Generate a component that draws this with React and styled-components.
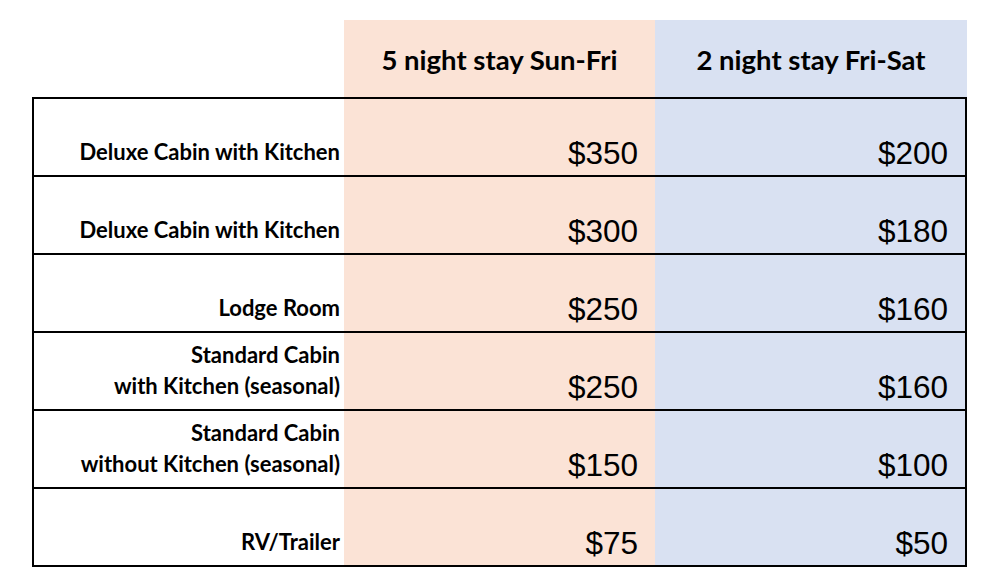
import React from "react";
import styled, { createGlobalStyle } from "styled-components";

const Global = createGlobalStyle`
  html, body { margin: 0; padding: 0; background: #fff; }
  body { font-family: Lato, "Liberation Sans", sans-serif; color: #000; }
`;

const PEACH = "#FBE3D6";
const BLUE = "#D9E1F2";

const Page = styled.div`
  width: 996px;
  height: 586px;
  padding: 20px 0 0 32px;
  box-sizing: border-box;
`;

const HeaderRow = styled.div`
  display: grid;
  grid-template-columns: 312px 311px 312px;
  height: 77px;
`;

const HeaderCell = styled.div`
  background: ${(p) => p.$bg || "transparent"};
  display: flex;
  align-items: center;
  justify-content: center;
  padding-top: 2px;
  font-family: Lato, "Liberation Sans", sans-serif;
  font-weight: 700;
  font-size: 27.5px;
`;

const Body = styled.div`
  width: 935px;
  box-sizing: border-box;
  border: 2px solid #000;
`;

const Row = styled.div`
  display: grid;
  grid-template-columns: 310px 311px 310px;
  height: ${(p) => (p.$last ? "76px" : "78px")};
  box-sizing: border-box;
  border-bottom: ${(p) => (p.$last ? "none" : "2px solid #000")};
`;

const Label = styled.div`
  display: flex;
  flex-direction: column;
  justify-content: flex-end;
  align-items: flex-end;
  text-align: right;
  padding: 0 4px 8px 0;
  font-family: Lato, "Liberation Sans", sans-serif;
  font-weight: 700;
  font-size: 22px;
  line-height: 31px;
`;

const Price = styled.div`
  background: ${(p) => p.$bg};
  display: flex;
  justify-content: flex-end;
  align-items: flex-end;
  padding: 0 17px 4px 0;
  font-family: "Liberation Sans", Arial, sans-serif;
  font-size: 31.5px;
  line-height: 36px;
`;

const rows = [
  { label: ["Deluxe Cabin with Kitchen"], a: "$350", b: "$200" },
  { label: ["Deluxe Cabin with Kitchen"], a: "$300", b: "$180" },
  { label: ["Lodge Room"], a: "$250", b: "$160" },
  { label: ["Standard Cabin", "with Kitchen (seasonal)"], a: "$250", b: "$160" },
  { label: ["Standard Cabin", "without Kitchen (seasonal)"], a: "$150", b: "$100" },
  { label: ["RV/Trailer"], a: "$75", b: "$50" },
];

export default function App() {
  return (
    <Page>
      <Global />
      <HeaderRow>
        <HeaderCell />
        <HeaderCell $bg={PEACH}>5 night stay Sun-Fri</HeaderCell>
        <HeaderCell $bg={BLUE}>2 night stay Fri-Sat</HeaderCell>
      </HeaderRow>
      <Body>
        {rows.map((r, i) => (
          <Row key={i} $last={i === rows.length - 1}>
            <Label>
              {r.label.map((l, j) => (
                <span key={j}>{l}</span>
              ))}
            </Label>
            <Price $bg={PEACH}>{r.a}</Price>
            <Price $bg={BLUE}>{r.b}</Price>
          </Row>
        ))}
      </Body>
    </Page>
  );
}
